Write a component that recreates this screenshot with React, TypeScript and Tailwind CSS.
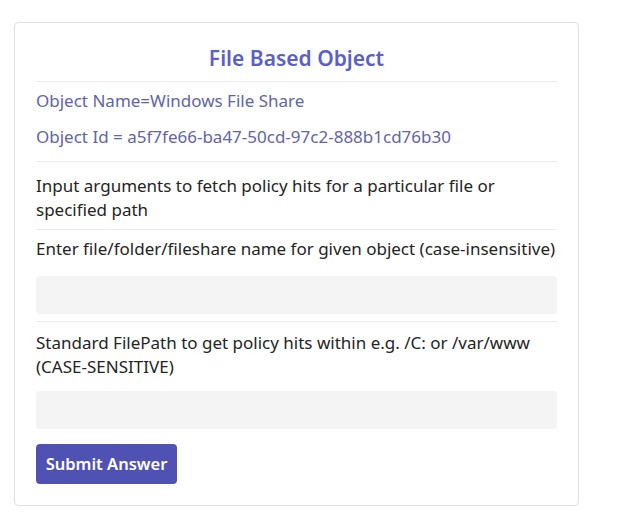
import React from "react";

export default function App() {
  const font: React.CSSProperties = { fontFamily: "'Noto Sans', 'Open Sans', sans-serif" };
  return (
    <div className="bg-white min-h-[525px] pt-[22px] pl-[14px]" style={font}>
      <div className="w-[565px] border border-[#e0e0e0] rounded-[4px] px-[21px] pt-[17px] pb-[21px]">
        <h1 className="text-center text-[21px] font-semibold text-[#5b5fc7] leading-[36px] pb-[5px] border-b border-[#ececec]">
          File Based Object
        </h1>
        <div className="text-[17px] text-[#6264a7] leading-[24px] pt-[7px] pb-[12px] border-b border-[#ececec]">
          <p>Object Name=Windows File Share</p>
          <p className="mt-[12px]">Object Id = a5f7fe66-ba47-50cd-97c2-888b1cd76b30</p>
        </div>
        <p className="text-[17px] text-[#242424] leading-[24px] pt-[12px] pb-[7px] border-b border-[#ececec]">
          Input arguments to fetch policy hits for a particular file or specified path
        </p>
        <div className="pt-[7px] pb-[7px] border-b border-[#ececec]">
          <p className="text-[17px] text-[#242424] leading-[24px]">
            Enter file/folder/fileshare name for given object (case-insensitive)
          </p>
          <input className="mt-[15px] block w-full h-[38px] bg-[#f4f4f4] rounded-[4px] outline-none" />
        </div>
        <div className="pt-[9px]">
          <p className="text-[17px] text-[#242424] leading-[24px]">
            Standard FilePath to get policy hits within e.g. /C: or /var/www (CASE-SENSITIVE)
          </p>
          <input className="mt-[12px] block w-full h-[38px] bg-[#f4f4f4] rounded-[4px] outline-none" />
        </div>
        <button className="mt-[15px] h-[40px] w-[141px] bg-[#4f52b2] rounded-[4px] text-white text-[16.5px] font-semibold">
          Submit Answer
        </button>
      </div>
    </div>
  );
}
